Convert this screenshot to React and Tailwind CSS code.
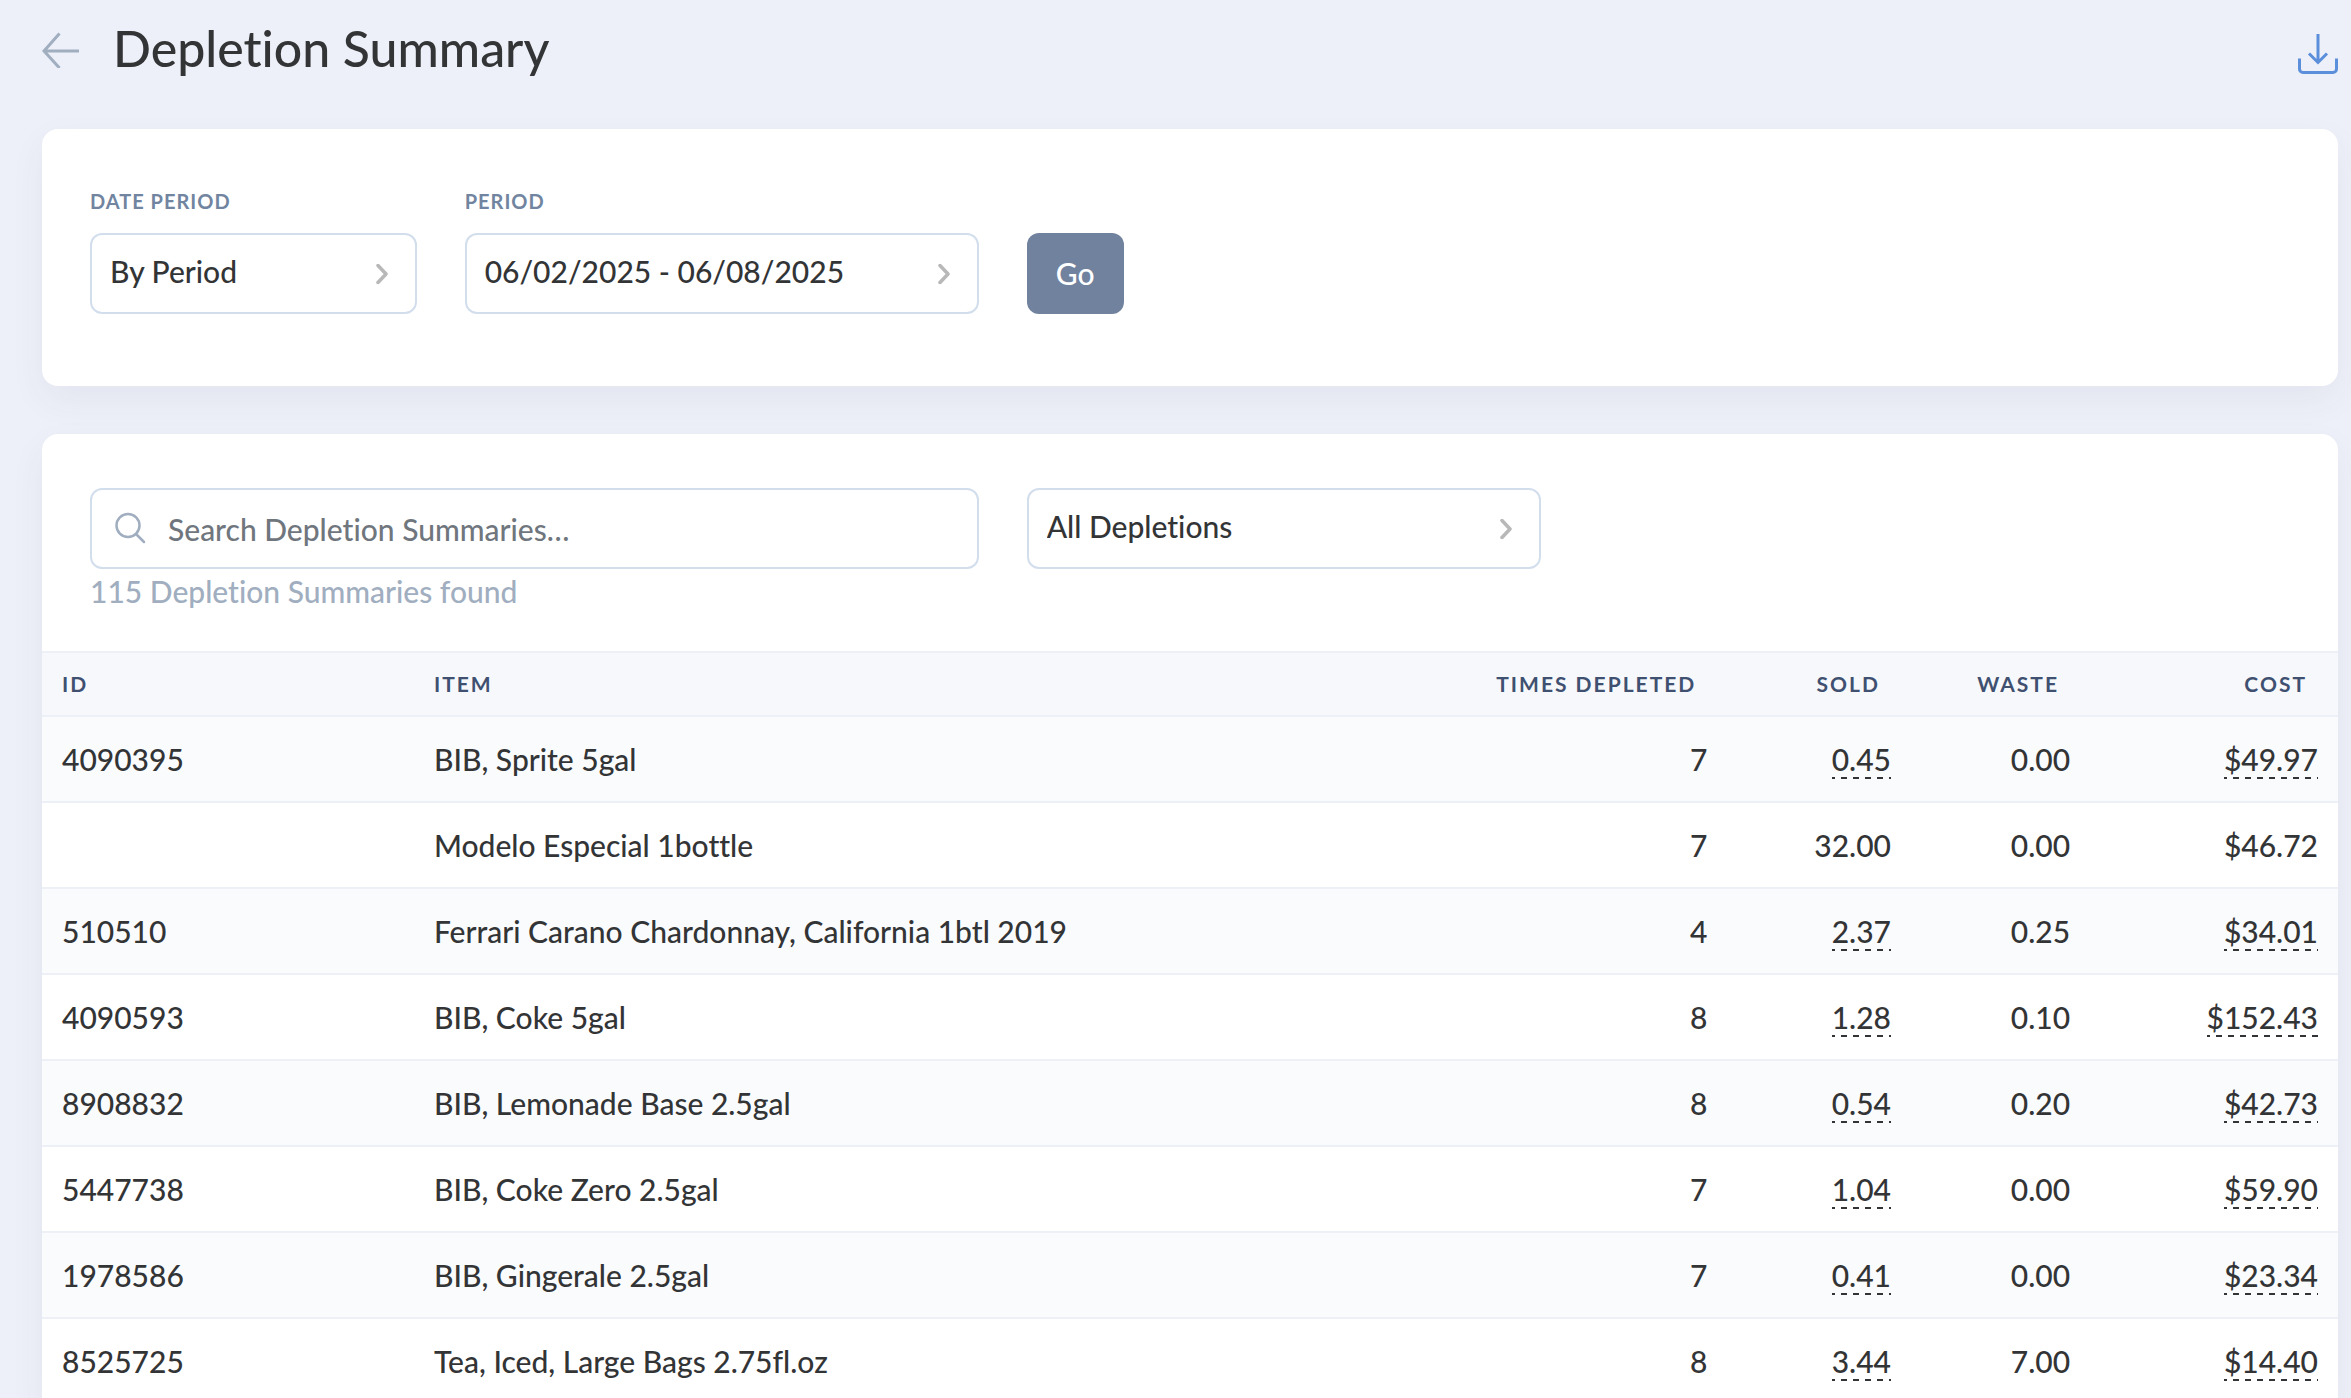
import React from "react";

const rows = [
  { id: "4090395", item: "BIB, Sprite 5gal", times: 7, sold: "0.45", waste: "0.00", cost: "$49.97", linked: true },
  { id: "", item: "Modelo Especial 1bottle", times: 7, sold: "32.00", waste: "0.00", cost: "$46.72", linked: false },
  { id: "510510", item: "Ferrari Carano Chardonnay, California 1btl 2019", times: 4, sold: "2.37", waste: "0.25", cost: "$34.01", linked: true },
  { id: "4090593", item: "BIB, Coke 5gal", times: 8, sold: "1.28", waste: "0.10", cost: "$152.43", linked: true },
  { id: "8908832", item: "BIB, Lemonade Base 2.5gal", times: 8, sold: "0.54", waste: "0.20", cost: "$42.73", linked: true },
  { id: "5447738", item: "BIB, Coke Zero 2.5gal", times: 7, sold: "1.04", waste: "0.00", cost: "$59.90", linked: true },
  { id: "1978586", item: "BIB, Gingerale 2.5gal", times: 7, sold: "0.41", waste: "0.00", cost: "$23.34", linked: true },
  { id: "8525725", item: "Tea, Iced, Large Bags 2.75fl.oz", times: 8, sold: "3.44", waste: "7.00", cost: "$14.40", linked: true },
];

function Select({ id, label, options }) {
  return (
    <div className="relative">
      <select
        id={id}
        aria-label={label}
        className="block h-[81px] w-full appearance-none rounded-xl border-2 border-[#d3deed] bg-white pr-16 pb-1 pl-[18px] text-[30px] font-medium text-[#333436]"
      >
        {options.map((option) => (
          <option key={option}>{option}</option>
        ))}
      </select>
      <svg
        className="pointer-events-none absolute top-1/2 right-[29px] h-[21px] w-3 -translate-y-1/2"
        viewBox="0 0 12 21"
        fill="none"
        stroke="#b8b8b8"
        strokeWidth="3.500"
        strokeLinecap="round"
        strokeLinejoin="round"
        aria-hidden="true"
      >
        <path d="M2 2l8 8.500L2 19" />
      </svg>
    </div>
  );
}

function Value({ linked, children }) {
  if (!linked) return children;
  return (
    <a
      href="#"
      className="inline-block bg-[repeating-linear-gradient(90deg,#333436_0_3px,transparent_3px_9px,#333436_9px_12px)] bg-[length:100%_2px] bg-bottom bg-no-repeat leading-10"
    >
      {children}
    </a>
  );
}

export default function App() {
  return (
    <div className="min-h-screen bg-[#edf0f8] pr-[13px] pl-[42px] font-['Lato',sans-serif] text-[30px] font-medium text-[#333436] [font-variant-ligatures:none]">
      <header className="flex h-[129px] items-start justify-between">
        <div className="flex items-center gap-[34px] pt-5">
          <a href="#" aria-label="Back">
            <svg className="h-[36px] w-[37px]" viewBox="0 0 37 36" fill="none" stroke="#a0aec0" strokeWidth="3" aria-hidden="true">
              <path d="M37 19H2M17.500 1.500L2 19l15.500 17" />
            </svg>
          </a>
          <h1 className="pb-1 text-[50px] leading-14 font-medium">Depletion Summary</h1>
        </div>
        <button type="button" aria-label="Download" className="pt-[34px]">
          <svg className="h-10 w-10" viewBox="0 0 40 40" fill="none" stroke="#5b8edb" strokeWidth="3" aria-hidden="true">
            <path d="M20 0v28M11 19.500l9 9 9-9M1.500 24.500V35a3.500 3.500 0 0 0 3.500 3.500h30a3.500 3.500 0 0 0 3.500-3.500V24.500" />
          </svg>
        </button>
      </header>

      <main className="flex flex-col gap-12">
        <section className="grid grid-cols-12 items-end gap-x-12 rounded-2xl bg-white px-12 pt-[58px] pb-[72px] shadow-[0_14px_36px_rgba(60,72,100,0.06)]">
          <div className="col-span-2">
            <label htmlFor="date-period" className="block pb-[18px] text-[20px] leading-7 font-bold tracking-[1px] text-[#7184a0]">
              DATE PERIOD
            </label>
            <Select id="date-period" options={["By Period"]} />
          </div>
          <div className="col-span-3">
            <label htmlFor="period" className="block pb-[18px] text-[20px] leading-7 font-bold tracking-[1px] text-[#7184a0]">
              PERIOD
            </label>
            <Select id="period" options={["06/02/2025 - 06/08/2025"]} />
          </div>
          <button type="button" className="h-[81px] w-[97px] justify-self-start rounded-xl bg-[#71829e] font-medium text-white">
            Go
          </button>
        </section>

        <section className="rounded-t-2xl bg-white shadow-[0_14px_36px_rgba(60,72,100,0.06)]">
          <div className="grid grid-cols-12 items-start gap-x-12 px-12 pt-[54px] pb-[38px]">
            <div className="col-span-5">
              <div className="relative">
                <svg
                  className="pointer-events-none absolute top-6 left-6 h-8 w-8"
                  viewBox="0 0 32 32"
                  fill="none"
                  stroke="#a0aec0"
                  strokeWidth="2.500"
                  strokeLinecap="round"
                  aria-hidden="true"
                >
                  <circle cx="14" cy="13.500" r="11.500" />
                  <path d="M22 22l8 8" />
                </svg>
                <input
                  type="text"
                  aria-label="Search"
                  placeholder="Search Depletion Summaries…"
                  className="block h-[81px] w-full rounded-xl border-2 border-[#d3deed] bg-white pr-6 pl-[76px] font-medium placeholder:text-[#70767d]"
                />
              </div>
              <p className="leading-[44px] text-[#a0aec0]">115 Depletion Summaries found</p>
            </div>
            <div className="col-span-3">
              <Select id="depletions" label="Depletions" options={["All Depletions"]} />
            </div>
          </div>

          <table className="w-full table-fixed border-collapse">
            <thead>
              <tr className="h-16 border-y-2 border-[#edf0f7] bg-[#f7f8fc] text-[21px] tracking-[2px] text-[#3f5070]">
                <th scope="col" className="w-[16.2%] px-5 text-left font-bold">ID</th>
                <th scope="col" className="px-5 text-left font-bold">ITEM</th>
                <th scope="col" className="w-[13.1%] pr-[31px] text-right font-bold">TIMES DEPLETED</th>
                <th scope="col" className="w-[8%] pr-[31px] text-right font-bold">SOLD</th>
                <th scope="col" className="w-[7.8%] pr-[31px] text-right font-bold">WASTE</th>
                <th scope="col" className="w-[10.8%] pr-[31px] text-right font-bold">COST</th>
              </tr>
            </thead>
            <tbody>
              {rows.map((row) => (
                <tr key={row.item} className="h-[86px] border-b-2 border-[#edf0f7] odd:bg-[#fafbfd]">
                  <td className="px-5">{row.id}</td>
                  <td className="px-5">{row.item}</td>
                  <td className="px-5 text-right">{row.times}</td>
                  <td className="px-5 text-right">
                    <Value linked={row.linked}>{row.sold}</Value>
                  </td>
                  <td className="px-5 text-right">{row.waste}</td>
                  <td className="px-5 text-right">
                    <Value linked={row.linked}>{row.cost}</Value>
                  </td>
                </tr>
              ))}
            </tbody>
          </table>
        </section>
      </main>
    </div>
  );
}
